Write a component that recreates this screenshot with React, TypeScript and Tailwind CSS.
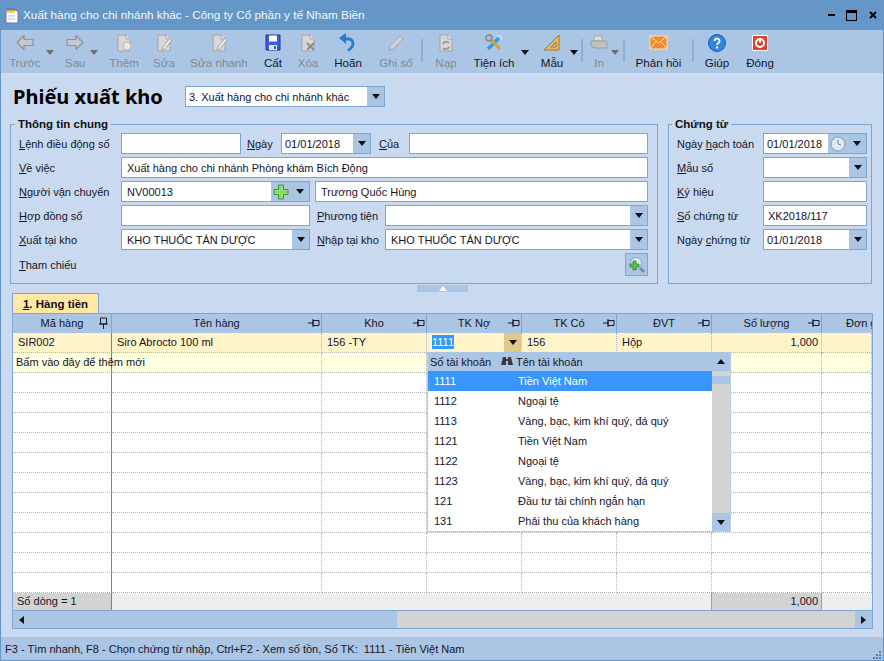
import type { ReactNode } from "react";

const Caret = ({ up = false, color = "#111" }: { up?: boolean; color?: string }) => (
  <svg width="8" height="5" viewBox="0 0 8 5" className="shrink-0">
    <polygon points={up ? "0,5 8,5 4,0" : "0,0 8,0 4,5"} fill={color} />
  </svg>
);

const Doc = ({ children }: { children?: ReactNode }) => (
  <svg width="20" height="20" viewBox="0 0 20 20">
    <path d="M4 2h8l4 4v12H4z" fill="#d6d6d6" stroke="#a5a5a5" />
    <path d="M12 2v4h4" fill="#efefef" stroke="#a5a5a5" />
    {children}
  </svg>
);

const icons: Record<string, ReactNode> = {
  back: (
    <svg width="20" height="20" viewBox="0 0 20 20">
      <path d="M2 9.500l7-7v4h9v6H9v4z" fill="#c6c9cc" stroke="#8e9399" strokeWidth="1.2" strokeLinejoin="round" />
    </svg>
  ),
  next: (
    <svg width="20" height="20" viewBox="0 0 20 20">
      <path d="M18 9.500l-7-7v4H2v6h9v4z" fill="#c6c9cc" stroke="#8e9399" strokeWidth="1.2" strokeLinejoin="round" />
    </svg>
  ),
  add: (
    <Doc>
      <circle cx="13" cy="13" r="4" fill="#e8e8e8" stroke="#b5b5b5" />
    </Doc>
  ),
  edit: (
    <Doc>
      <path d="M9 14l7-9 2 2-7 9-3 1z" fill="#ececec" stroke="#a5a5a5" />
    </Doc>
  ),
  save: (
    <svg width="20" height="20" viewBox="0 0 20 20">
      <path d="M3 2h14v15H3z" fill="#3b5fe0" stroke="#1f2fa8" />
      <path d="M6 2.500h8v6H6z" fill="#fff" />
      <path d="M6 12h8v5H6z" fill="#dfe6f5" />
      <path d="M11 13h2v3h-2z" fill="#3b5fe0" />
    </svg>
  ),
  del: (
    <Doc>
      <path d="M9 10l7 7M16 10l-7 7" stroke="#8d8d8d" strokeWidth="2" />
    </Doc>
  ),
  undo: (
    <svg width="20" height="20" viewBox="0 0 20 20">
      <path d="M6 6h5a4.500 4.500 0 0 1 4 4.500c0 3-2 5-5 7" fill="none" stroke="#2b7bd0" strokeWidth="2.800" />
      <polygon points="1,5 8,0 8,11" fill="#2b7bd0" />
    </svg>
  ),
  pencil: (
    <svg width="20" height="20" viewBox="0 0 20 20">
      <path d="M3 17l1-4L14 3l3 3L7 16z" fill="#d0d0d0" stroke="#a8a8a8" />
    </svg>
  ),
  reload: (
    <Doc>
      <path d="M7 11a3.500 3.500 0 0 1 6-1M13 14a3.500 3.500 0 0 1-6 1" fill="none" stroke="#8d8d8d" strokeWidth="1.600" />
    </Doc>
  ),
  tools: (
    <svg width="20" height="20" viewBox="0 0 20 20">
      <path d="M4 16L15 5" stroke="#3f9be0" strokeWidth="3.500" />
      <path d="M13 3a3 3 0 0 1 4 4" fill="none" stroke="#bfe0f5" strokeWidth="2" />
      <path d="M16 16L6 6" stroke="#e0a030" strokeWidth="2.500" />
      <circle cx="5" cy="5" r="3" fill="none" stroke="#8a8f94" strokeWidth="1.800" />
    </svg>
  ),
  ruler: (
    <svg width="20" height="20" viewBox="0 0 20 20">
      <path d="M17 2v15H2z" fill="#e8b860" stroke="#a87820" />
      <path d="M14 9v5H9z" fill="#abc6e5" stroke="#a87820" />
    </svg>
  ),
  printer: (
    <svg width="20" height="20" viewBox="0 0 20 20">
      <path d="M5 3h8v5H5z" fill="#dcdcdc" stroke="#a8a8a8" />
      <path d="M2 8h15a2 2 0 0 1 1 3v4H6a4 4 0 0 1-4-4z" fill="#c0c0c0" stroke="#9e9e9e" />
    </svg>
  ),
  mail: (
    <svg width="20" height="20" viewBox="0 0 20 20">
      <path d="M1 3h17v13H1z" fill="#f08a2c" stroke="#fce0c0" />
      <path d="M1 3l8.500 7L18 3M1 16l6-7.500M18 16l-6-7.500" fill="none" stroke="#fde8d0" />
    </svg>
  ),
  help: (
    <svg width="20" height="20" viewBox="0 0 20 20">
      <circle cx="10" cy="10" r="8.500" fill="#2f86e0" stroke="#1a5cb0" />
      <path d="M7.500 8a2.500 2.500 0 1 1 3.500 2.300c-.7.400-1 .8-1 1.700" fill="none" stroke="#fff" strokeWidth="1.800" />
      <path d="M9 13.500h2v2H9z" fill="#fff" />
    </svg>
  ),
  close: (
    <svg width="20" height="20" viewBox="0 0 20 20">
      <path d="M2.500 2.500h15v15h-15z" fill="#dd4430" stroke="#fff" />
      <circle cx="10" cy="10" r="4" fill="none" stroke="#fff" strokeWidth="2" />
      <path d="M10 5.500v4" stroke="#fff" strokeWidth="2" />
    </svg>
  ),
};

const tools = [
  { label: "Trước", icon: "back", cls: "w-[44px]", arrow: "left-[43px]" },
  { label: "Sau", icon: "next", cls: "w-[56px]", arrow: "left-[43px]" },
  { label: "Thêm", icon: "add", cls: "w-[42px]" },
  { label: "Sửa", icon: "edit", cls: "w-[38px]" },
  { label: "Sửa nhanh", icon: "edit", cls: "w-[72px]" },
  { label: "Cất", icon: "save", cls: "w-[36px]", on: true },
  { label: "Xóa", icon: "del", cls: "w-[34px]" },
  { label: "Hoãn", icon: "undo", cls: "w-[46px]", on: true },
  { label: "Ghi sổ", icon: "pencil", cls: "w-[50px]" },
  { sep: true },
  { label: "Nạp", icon: "reload", cls: "w-[46px]" },
  { label: "Tiện ích", icon: "tools", cls: "w-[50px]", on: true, arrow: "left-[52px]" },
  { label: "Mẫu", icon: "ruler", cls: "w-[58px] ml-[4px]", on: true, arrow: "left-[47px]" },
  { sep: true },
  { label: "In", icon: "printer", cls: "w-[32px]", arrow: "left-[28px]", dim: true },
  { sep: true, cls: "ml-[8px]" },
  { label: "Phản hồi", icon: "mail", cls: "w-[67px]", on: true },
  { sep: true },
  { label: "Giúp", icon: "help", cls: "w-[46px]", on: true },
  { label: "Đóng", icon: "close", cls: "w-[40px]", on: true },
];

function Toolbar() {
  return (
    <div className="flex h-[43px] bg-[#abc6e5] pl-[2px] text-[11.6px]">
      {tools.map((t, i) =>
        t.sep ? (
          <div key={i} className={`mt-[9px] h-[23px] w-[2px] bg-[#8db1da] ${t.cls ?? ""}`} />
        ) : (
          <div key={i} className={`relative flex flex-col items-center pt-[3px] ${t.cls}`}>
            <div className="h-[20px]">{icons[t.icon as string]}</div>
            <span className={`mt-[3px] whitespace-nowrap ${t.on ? "text-[#14142a]" : "text-[#83888e]"}`}>{t.label}</span>
            {t.arrow && (
              <div className={`absolute top-[20px] ${t.arrow}`}>
                <Caret color={t.on ? "#111" : "#6b6f75"} />
              </div>
            )}
          </div>
        ),
      )}
    </div>
  );
}

// nhãn có chữ gạch chân kiểu phím tắt
function Label({ a = "", u, b, cls }: { a?: string; u: string; b: string; cls: string }) {
  return (
    <label className={`shrink-0 whitespace-nowrap text-[#14142a] ${cls}`}>
      {a}
      <span className="underline">{u}</span>
      {b}
    </label>
  );
}

function DropBtn({ color = "bg-[#abc6e5]" }: { color?: string }) {
  return (
    <div className={`flex h-full w-[17px] shrink-0 items-center justify-center ${color}`}>
      <Caret />
    </div>
  );
}

function Field({ cls = "", text = "", pad = "pl-[5px]", children }: { cls?: string; text?: string; pad?: string; children?: ReactNode }) {
  return (
    <div className={`flex h-[21px] min-w-0 items-center border border-[#7ea6d2] bg-white text-[#14142a] ${cls}`}>
      <span className={`min-w-0 flex-1 whitespace-nowrap ${pad}`}>{text}</span>
      {children}
    </div>
  );
}

function Row({ children }: { children: ReactNode }) {
  return <div className="flex h-[21px] items-center">{children}</div>;
}

function MagnifierPlus() {
  return (
    <svg width="18" height="18" viewBox="0 0 18 18">
      <circle cx="8" cy="7" r="5.500" fill="#dcecf8" stroke="#7ea6d2" />
      <path d="M12 12l4 4" stroke="#8a78c8" strokeWidth="2.500" />
      <path d="M5 5h3v3h3v3H8v3H5v-3H2V8h3z" fill="#5cc040" stroke="#2c8a24" strokeWidth=".8" />
    </svg>
  );
}

function GeneralInfo() {
  return (
    <fieldset className="h-[167px] w-[648px] min-w-0 shrink-0 border border-[#7ea6d2] pl-[8px] pr-[9px]">
      <legend className="-ml-[4px] px-[3px] text-[11.5px] font-bold text-[#111]">Thông tin chung</legend>
      <div className="flex flex-col gap-[3px] pt-[2px]">
        <Row>
          <Label u="L" b="ệnh điều động số" cls="w-[102px]" />
          <Field cls="w-[120px]" />
          <Label u="N" b="gày" cls="ml-[6px] w-[34px]" />
          <Field cls="w-[90px]" text="01/01/2018" pad="pl-[3px]">
            <DropBtn />
          </Field>
          <Label u="C" b="ủa" cls="ml-[8px] w-[30px]" />
          <Field cls="flex-1" />
        </Row>
        <Row>
          <Label u="V" b="ề việc" cls="w-[102px]" />
          <Field cls="flex-1" text="Xuất hàng cho chi nhánh Phòng khám Bích Động" />
        </Row>
        <Row>
          <Label u="N" b="gười vận chuyển" cls="w-[102px]" />
          <Field cls="w-[189px]" text="NV00013">
            <div className="flex h-full w-[38px] items-center justify-between bg-[#abc6e5] pl-[2px] pr-[5px]">
              <svg width="16" height="16" viewBox="0 0 16 16">
                <path d="M5.500 1h5v4.500H15v5h-4.500V15h-5v-4.500H1v-5h4.500z" fill="#8fdc6c" stroke="#3c9a30" />
              </svg>
              <Caret />
            </div>
          </Field>
          <Field cls="ml-[5px] flex-1" text="Trương Quốc Hùng" />
        </Row>
        <Row>
          <Label u="H" b="ợp đồng số" cls="w-[102px]" />
          <Field cls="w-[189px]" />
          <Label u="P" b="hương tiện" cls="ml-[7px] w-[68px]" />
          <Field cls="flex-1">
            <DropBtn />
          </Field>
        </Row>
        <Row>
          <Label u="X" b="uất tại kho" cls="w-[102px]" />
          <Field cls="w-[189px]" text="KHO THUỐC TÂN DƯỢC">
            <DropBtn />
          </Field>
          <Label u="N" b="hập tại kho" cls="ml-[7px] w-[68px]" />
          <Field cls="flex-1" text="KHO THUỐC TÂN DƯỢC">
            <DropBtn />
          </Field>
        </Row>
        <div className="flex h-[23px] items-center justify-between">
          <Label u="T" b="ham chiếu" cls="w-[102px]" />
          <div className="flex h-[23px] w-[23px] items-center justify-center border border-[#7ea6d2] bg-[#abc6e5]">
            <MagnifierPlus />
          </div>
        </div>
      </div>
    </fieldset>
  );
}

function VoucherInfo() {
  return (
    <fieldset className="h-[167px] w-[204px] min-w-0 shrink-0 border border-[#7ea6d2] pl-[8px] pr-[4px]">
      <legend className="-ml-[5px] px-[3px] text-[11.5px] font-bold text-[#111]">Chứng từ</legend>
      <div className="flex flex-col gap-[3px] pt-[2px]">
        <Row>
          <Label a="Ngày " u="h" b="ạch toán" cls="w-[86px]" />
          <Field cls="flex-1" text="01/01/2018" pad="pl-[3px]">
            <div className="flex h-full w-[38px] items-center justify-between bg-[#abc6e5] pl-[2px] pr-[5px]">
              <svg width="16" height="16" viewBox="0 0 16 16">
                <circle cx="8" cy="8" r="7" fill="#dfe8ee" stroke="#8d979e" />
                <path d="M8 4v4l3 1" fill="none" stroke="#6f8aa0" />
              </svg>
              <Caret />
            </div>
          </Field>
        </Row>
        <Row>
          <Label u="M" b="ẫu số" cls="w-[86px]" />
          <Field cls="flex-1">
            <DropBtn />
          </Field>
        </Row>
        <Row>
          <Label u="K" b="ý hiệu" cls="w-[86px]" />
          <Field cls="flex-1" />
        </Row>
        <Row>
          <Label u="S" b="ố chứng từ" cls="w-[86px]" />
          <Field cls="flex-1" text="XK2018/117" pad="pl-[4px]" />
        </Row>
        <Row>
          <Label a="Ngày " u="c" b="hứng từ" cls="w-[86px]" />
          <Field cls="flex-1" text="01/01/2018" pad="pl-[3px]">
            <DropBtn />
          </Field>
        </Row>
      </div>
    </fieldset>
  );
}

const PinH = () => (
  <svg width="12" height="9" viewBox="0 0 12 9" className="absolute right-[1px] top-[5px]">
    <path d="M5 1.500h6v5H5zM5 0v8M0 4h5" fill="none" stroke="#1a1a2a" />
  </svg>
);

const PinV = () => (
  <svg width="9" height="12" viewBox="0 0 9 12" className="absolute right-[3px] top-[3px]">
    <path d="M1.500 1h6v6h-6zM0 7h9M4.500 7v5" fill="none" stroke="#1a1a2a" />
  </svg>
);

const cols = ["Mã hàng", "Tên hàng", "Kho", "TK Nợ", "TK Có", "ĐVT", "Số lượng"];
const gridCols = "grid grid-cols-[99px_210px_105px_95px_95px_95px_110px_50px]";
const cell = "border-b border-r border-dotted border-b-[#b4b4b4] border-r-[#b4b4b4]";
const firstCell = "border-b border-r border-solid [border-bottom-style:dotted] border-b-[#b4b4b4] border-r-[#808080]";

const Caret2 = ({ dir }: { dir: "left" | "right" }) => (
  <svg width="5" height="8" viewBox="0 0 5 8">
    <polygon points={dir === "left" ? "5,0 5,8 0,4" : "0,0 0,8 5,4"} fill="#111" />
  </svg>
);

function DataGrid() {
  return (
    <div className="relative ml-[11px] w-[861px] border border-[#7ea6d2]">
      <div className={`${gridCols} h-[19px] bg-[#abc6e5]`}>
        {cols.map((c, i) => (
          <div key={c} className="relative flex items-center justify-center border-r border-[#7ea6d2] pb-[1px] text-[#14142a]">
            {c}
            {i === 0 ? <PinV /> : <PinH />}
          </div>
        ))}
        <div className="overflow-hidden whitespace-nowrap pl-[24px] leading-[18px] text-[#14142a]">Đơn giá</div>
      </div>

      <div className={`${gridCols} h-[20px] bg-[#fff3c9] leading-[19px] text-[#14142a]`}>
        <div className={`${firstCell} pl-[5px]`}>SIR002</div>
        <div className={`${cell} pl-[5px]`}>Siro Abrocto 100 ml</div>
        <div className={`${cell} pl-[5px]`}>156 -TY</div>
        <div className={`${cell} flex justify-between pl-[5px]`}>
          <span className="mt-[2px] h-[14px] bg-[#3399ff] leading-[14px] text-white">1111</span>
          <div className="flex h-[19px] w-[17px] items-center justify-center bg-[#e0c987]">
            <Caret />
          </div>
        </div>
        <div className={`${cell} pl-[5px]`}>156</div>
        <div className={`${cell} pl-[5px]`}>Hộp</div>
        <div className={`${cell} pr-[3px] text-right`}>1,000</div>
        <div className={cell} />
      </div>

      <div className={`${gridCols} h-[20px] bg-[#ffffe1] leading-[19px] text-[#14142a]`}>
        <div className={`${firstCell} whitespace-nowrap pl-[3px]`}>Bấm vào đây để thêm mới</div>
        {[1, 2, 3, 4, 5, 6, 7].map((k) => (
          <div key={k} className={cell} />
        ))}
      </div>

      {[1, 2, 3, 4, 5, 6, 7, 8, 9, 10, 11].map((r) => (
        <div key={r} className={`${gridCols} h-[20px] bg-white`}>
          <div className={firstCell} />
          {[1, 2, 3, 4, 5, 6, 7].map((k) => (
            <div key={k} className={cell} />
          ))}
        </div>
      ))}

      <div className={`${gridCols} h-[18px] border-b border-[#7ea6d2] bg-[#eeeeee] leading-[17px] text-[#14142a]`}>
        <div className="border-r border-[#808080] bg-[#d3d3d3] pl-[4px]">Số dòng = 1</div>
        <div className="col-span-5 border-r border-[#7ea6d2]" />
        <div className="border-r border-[#7ea6d2] bg-[#d3d3d3] pr-[3px] text-right">1,000</div>
        <div />
      </div>

      <div className="flex h-[17px]">
        <div className="flex w-[384px] items-center bg-[#abc6e5] pl-[6px]">
          <Caret2 dir="left" />
        </div>
        <div className="flex-1 bg-[#d3d3d3]" />
        <div className="flex w-[17px] items-center justify-center bg-[#abc6e5]">
          <Caret2 dir="right" />
        </div>
      </div>

      <AccountPopup />
    </div>
  );
}

const accounts = [
  ["1111", "Tiền Việt Nam"],
  ["1112", "Ngoại tệ"],
  ["1113", "Vàng, bạc, kim khí quý, đá quý"],
  ["1121", "Tiền Việt Nam"],
  ["1122", "Ngoại tệ"],
  ["1123", "Vàng, bạc, kim khí quý, đá quý"],
  ["121", "Đầu tư tài chính ngắn hạn"],
  ["131", "Phải thu của khách hàng"],
];

function AccountPopup() {
  return (
    <div className="absolute left-[414px] top-[38px] w-[304px] border border-t-0 border-[#b5cde8] bg-white text-[#14142a]">
      <div className="flex h-[19px] items-center bg-[#abc6e5] pl-[2px]">
        <span className="w-[71px] whitespace-nowrap">Số tài khoản</span>
        <svg width="12" height="11" viewBox="0 0 12 11">
          <path d="M2 1h3v2h2V1h3l2 8H7V5H5v4H0z" fill="#3a3a44" />
        </svg>
        <span className="ml-[3px]">Tên tài khoản</span>
        <div className="ml-auto mr-[5px]">
          <Caret up />
        </div>
      </div>
      <div className="flex h-[160px]">
        <div className="w-[285px]">
          {accounts.map(([code, name], i) => (
            <div key={i} className={`flex h-[20px] items-center ${i === 0 ? "bg-[#3a96ff] text-white" : ""}`}>
              <span className="w-[90px] pl-[6px]">{code}</span>
              <span className="whitespace-nowrap">{name}</span>
            </div>
          ))}
        </div>
        <div className="flex w-[18px] flex-col bg-[#d3d3d3]">
          <div className="mt-[5px] h-[8px] bg-[#abc6e5]" />
          <div className="mt-auto flex h-[18px] items-center justify-center bg-[#abc6e5]">
            <Caret />
          </div>
        </div>
      </div>
    </div>
  );
}

export default function App() {
  return (
    <div className="flex h-[661px] w-[884px] flex-col overflow-hidden border-x border-b border-[#6497c8] bg-[#c9daf0] [font-family:Liberation_Sans,sans-serif] text-[11px] leading-[14px]">
      <div className="flex h-[30px] shrink-0 items-center bg-[#6497c8] pl-[3px] pr-[6px]">
        <svg width="16" height="17" viewBox="0 0 16 17">
          <path d="M2 3h10l2 2v11H2z" fill="#fff" stroke="#7a6ab0" />
          <path d="M3 3h8v3H3z" fill="#f2d14a" />
          <path d="M4 1v3M7 1v3M10 1v3" stroke="#6a5aa8" />
          <path d="M4 9h7M4 12h7" stroke="#a9b8d8" />
        </svg>
        <span className="ml-[3px] text-[11.8px] text-[#f2f6fb]">Xuất hàng cho chi nhánh khác - Công ty Cổ phần y tế Nham Biền</span>
        <div className="ml-auto flex items-center">
          <div className="h-[2px] w-[7px] bg-black" />
          <div className="ml-[11px] h-[11px] w-[11px] border border-t-[3px] border-black" />
          <svg width="8" height="8" viewBox="0 0 8 8" className="ml-[12px]">
            <path d="M1 1l6 6M7 1l-6 6" stroke="#000" strokeWidth="1.800" />
          </svg>
        </div>
      </div>

      <Toolbar />

      <div className="flex items-center pl-[12px] pt-[13px]">
        <h1 className="w-[172px] font-[Noto_Sans] text-[20px] font-bold leading-[20px] text-black">Phiếu xuất kho</h1>
        <Field cls="w-[200px]" text="3. Xuất hàng cho chi nhánh khác" pad="pl-[3px]">
          <DropBtn />
        </Field>
      </div>

      <div className="ml-[9px] mt-[10px] flex gap-[10px]">
        <GeneralInfo />
        <VoucherInfo />
      </div>

      <div className="ml-[416px] mt-[1px] flex h-[7px] w-[51px] items-center justify-center bg-[#abc6e5]">
        <Caret up color="#fff" />
      </div>

      <div className="ml-[11px] mt-[1px] flex h-[20px] w-[87px] items-center justify-center border-x border-t border-[#7ea6d2] bg-[#ffe8a6] text-[11.5px] font-bold text-[#111]">
        <span>
          <span className="underline">1</span>. Hàng tiền
        </span>
      </div>

      <DataGrid />

      <div className="relative mt-[8px] flex h-[23px] items-center bg-[#abc6e5] pl-[4px] text-[#14142a]">
        F3 - Tìm nhanh, F8 - Chọn chứng từ nhập, Ctrl+F2 - Xem số tồn, Số TK:&nbsp; 1111 - Tiền Việt Nam
        <svg width="9" height="9" viewBox="0 0 9 9" className="absolute bottom-[1px] right-[1px]">
          <path d="M6 1h2v2H6zM3 4h2v2H3zM6 4h2v2H6zM0 7h2v2H0zM3 7h2v2H3zM6 7h2v2H6z" fill="#5f7f9f" />
        </svg>
      </div>
    </div>
  );
}
